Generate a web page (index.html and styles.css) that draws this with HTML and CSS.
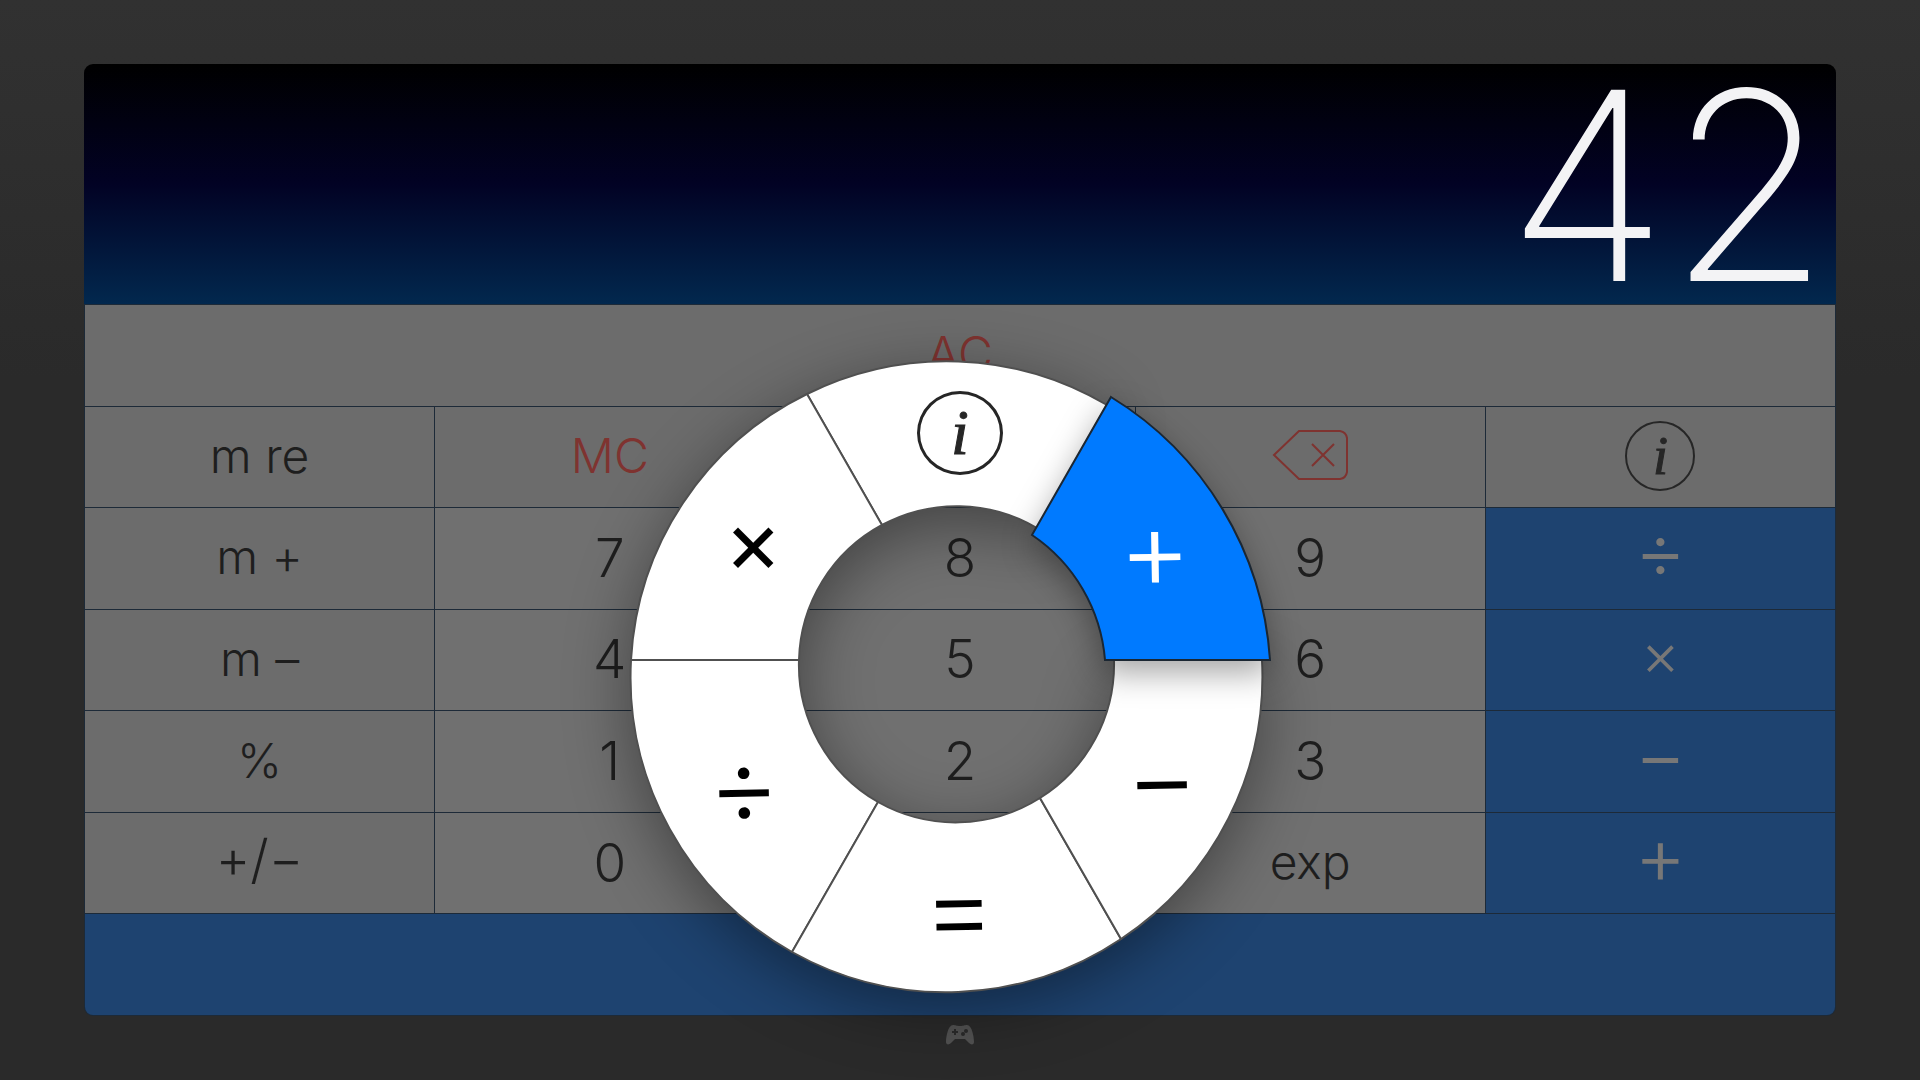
FILE: index.html
```
<!DOCTYPE html>
<html lang="en">
<head>
    <meta charset="UTF-8" />
    <title>Calculator</title>
    <link rel="stylesheet" href="styles.css">
</head>
<body>
<main class="calculator">
    <output class="display">42</output>
    <div class="keypad">
        <button class="key clear wide">AC</button>

        <button class="key">m re</button>
        <button class="key clear">MC</button>
        <button class="key" aria-label="Copy"></button>
        <button class="key clear" aria-label="Delete">
            <svg width="76" height="52" viewBox="0 0 76 52" fill="none" stroke="currentColor" stroke-width="2">
                <path d="M2 25 27 1H68Q74 2 75 8V42Q74 48 68 49H27Z" />
                <path d="M40 14 62 36M62 14 40 36" />
            </svg>
        </button>
        <button class="key"><span class="info">i</span></button>

        <button class="key">m +</button>
        <button class="key digit">7</button>
        <button class="key digit">8</button>
        <button class="key digit">9</button>
        <button class="key operator">÷</button>

        <button class="key">m –</button>
        <button class="key digit">4</button>
        <button class="key digit">5</button>
        <button class="key digit">6</button>
        <button class="key operator times">×</button>

        <button class="key">%</button>
        <button class="key digit">1</button>
        <button class="key digit">2</button>
        <button class="key digit">3</button>
        <button class="key operator">−</button>

        <button class="key sign">+/−</button>
        <button class="key digit">0</button>
        <button class="key digit" aria-label="Decimal point"></button>
        <button class="key exp">exp</button>
        <button class="key operator">+</button>

        <button class="key operator wide equals" aria-label="Equals"></button>
    </div>
</main>

<footer class="footer">
    <svg width="28" height="20" viewBox="0 0 28 20">
        <path fill="#525252" d="M7 0C10 0 10 1 14 1S18 0 21 0C26 0 28 12 28 17 28 20 25 20 23 18L19 14H9L5 18C3 20 0 20 0 17 0 12 2 0 7 0Z" />
        <path stroke="#2a2a2a" stroke-width="2" d="M9 4V10M6 7H12" />
        <circle cx="20" cy="6" r="2" fill="#2a2a2a" />
        <circle cx="17" cy="9" r="2" fill="#2a2a2a" />
    </svg>
</footer>

<nav class="wheel">
    <svg class="ring" viewBox="0 0 680 680">
        <g class="slices">
            <path d="M187 54A315 315 0 0 1 487 65L417 188A158 158 0 0 0 262 185Z" />
            <path d="M187 54A315 315 0 0 0 11 320H179A158 158 0 0 1 262 185Z" />
            <path d="M11 320A315 315 0 0 0 172 612L258 462A158 158 0 0 1 179 320Z" />
            <path d="M172 612A315 315 0 0 0 501 599L420 458A158 158 0 0 1 258 462Z" />
            <path d="M501 599A315 315 0 0 0 642 320H494A158 158 0 0 1 420 458Z" />
        </g>
        <path class="active" d="M491 57A334 334 0 0 1 650 320H485A167 167 0 0 0 412 195Z" />
    </svg>
    <button class="item item-info"><span class="info">i</span></button>
    <button class="item item-plus">+</button>
    <button class="item item-minus">−</button>
    <button class="item item-equals">=</button>
    <button class="item item-divide">÷</button>
    <button class="item item-times">×</button>
</nav>
</body>
</html>
```
FILE: styles.css
```
* {
  box-sizing: border-box;
}
body {
  display: flex;
  flex-direction: column;
  height: 100vh;
  margin: 0;
  padding: 64px 84px 0;
  overflow: hidden;
  position: relative;
  font-family: Inter, "Liberation Sans", sans-serif;
  background: linear-gradient(#313131, #2a2a2a 35%, #2a2a2a);
}
button {
  padding: 0;
  border: none;
  font-family: inherit;
  cursor: pointer;
}
.calculator {
  flex: 1;
  display: flex;
  flex-direction: column;
}
.display {
  height: 240px;
  padding-right: 6px;
  border-radius: 9px 9px 0 0;
  background: linear-gradient(#000, #020224 50%, #02284e);
  color: #f3f3f5;
  font-size: 263px;
  font-weight: 200;
  line-height: 242px;
  text-align: right;
}
.keypad {
  flex: 1;
  display: grid;
  grid-template-columns: repeat(5, 1fr);
  grid-template-rows: repeat(7, 1fr);
  gap: 1px;
  padding: 1px;
  border-radius: 0 0 9px 9px;
  background: #1d2a38;
}
.key {
  display: flex;
  align-items: center;
  justify-content: center;
  padding-bottom: 2px;
  background: #6c6c6c;
  color: #1e1e1e;
  font-size: 48px;
  font-weight: 300;
  line-height: 1;
}
.wide {
  grid-column: 1 / -1;
}
.clear {
  color: #7f3330;
}
.digit {
  padding-bottom: 0;
  background: #707070;
  font-size: 53px;
}
.exp {
  background: #707070;
}
.sign {
  padding-bottom: 8px;
  font-size: 53px;
}
.operator {
  padding-bottom: 16px;
  background: #1e4370;
  color: #777;
  font-size: 80px;
}
.times {
  padding-bottom: 12px;
  font-size: 60px;
}
.equals {
  border-radius: 0 0 8px 8px;
}
.info {
  display: flex;
  align-items: center;
  justify-content: center;
  width: 70px;
  height: 70px;
  border: 2px solid #262626;
  border-radius: 50%;
  color: #262626;
  font-family: "Liberation Serif", serif;
  font-size: 54px;
  font-style: italic;
  font-weight: 400;
  -webkit-text-stroke: 1px;
}
.footer {
  height: 64px;
  padding-top: 9px;
  text-align: center;
}

/* radial menu over the keypad */
.wheel {
  position: absolute;
  top: calc(50% - 200px);
  left: calc(50% - 340px);
  width: 680px;
  height: 680px;
}
.ring {
  width: 100%;
  height: 100%;
  overflow: visible;
}
.slices {
  fill: #fff;
  stroke: #505050;
  stroke-width: 2;
  filter: drop-shadow(0 16px 32px rgba(0, 0, 0, 0.4));
}
.active {
  fill: #007aff;
  stroke: #1b2733;
  stroke-width: 2;
  filter: drop-shadow(0 12px 16px rgba(0, 0, 0, 0.35));
}
.item {
  position: absolute;
  display: flex;
  align-items: center;
  justify-content: center;
  width: 100px;
  height: 100px;
  padding-bottom: 16px;
  background: none;
  color: #000;
  font-size: 112px;
  font-weight: 300;
  line-height: 1;
}
.item .info {
  width: 86px;
  height: 84px;
  border-width: 3px;
  font-size: 64px;
}
.item-info {
  top: 43px;
  left: 290px;
  padding: 0;
}
.item-plus {
  top: 166px;
  left: 485px;
  color: #fff;
  rotate: -1deg;
}
.item-minus {
  top: 394px;
  left: 492px;
  rotate: -1deg;
}
.item-equals {
  top: 524px;
  left: 289px;
  rotate: -1deg;
}
.item-divide {
  top: 402px;
  left: 74px;
  rotate: -1deg;
}
.item-times {
  top: 159px;
  left: 83px;
  font-size: 88px;
  font-weight: 400;
}
```
